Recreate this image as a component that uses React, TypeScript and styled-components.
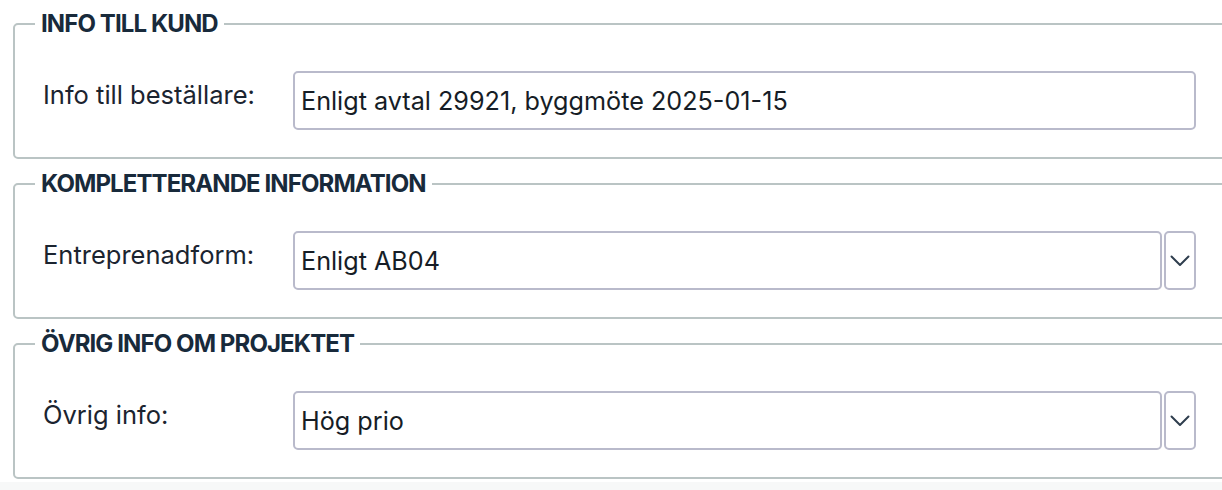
import React from "react";
import styled, { createGlobalStyle } from "styled-components";

const GlobalStyle = createGlobalStyle`
  html, body {
    margin: 0;
    padding: 0;
    background: #f7f8f8;
    overflow: hidden;
  }
  body {
    font-family: Inter, "Noto Sans", "Liberation Sans", sans-serif;
    color: #1b2430;
  }
`;

const Page = styled.div`
  display: flex;
  flex-direction: column;
  gap: 10px;
  padding: 9px 0 3px 13px;
  width: 1250px;
  background: #ffffff;
`;

const Fieldset = styled.fieldset`
  margin: 0;
  min-width: 0;
  border: 2px solid #bac4c4;
  border-radius: 5px;
  padding: 32px 0 27px 28px;
`;

const Legend = styled.legend`
  margin-left: -8px;
  padding: 0 6px;
  font-size: 24px;
  line-height: 30px;
  font-weight: 700;
  letter-spacing: -0.9px;
  color: #182a3b;
`;

const Row = styled.div`
  display: flex;
  align-items: flex-start;
`;

const Label = styled.label`
  width: 250px;
  flex: none;
  padding-top: 9px;
  font-size: 25.5px;
  line-height: 30px;
  color: #1b2430;
`;

const Control = styled.div`
  display: flex;
  gap: 2px;
  width: 903px;
`;

const Box = styled.div`
  flex: 1;
  height: 59px;
  box-sizing: border-box;
  border: 2px solid #b9bacb;
  border-radius: 5px;
  display: flex;
  align-items: center;
  padding: 0 6px;
  font-size: 25.2px;
  color: #161d26;
  background: #fff;
`;

const DropButton = styled.div`
  flex: none;
  width: 32px;
  height: 59px;
  box-sizing: border-box;
  border: 2px solid #b9bacb;
  border-radius: 5px;
  display: flex;
  align-items: center;
  justify-content: center;
  color: #2f3e4e;
`;

const Chevron = () => (
  <svg width="20" height="12" viewBox="0 0 20 12" fill="none">
    <path d="M1.5 1.5 L10 10 L18.5 1.5" stroke="currentColor" strokeWidth="2" strokeLinecap="round" strokeLinejoin="round" />
  </svg>
);

type FieldProps = { label: string; value: string; select?: boolean };

const Field = ({ label, value, select }: FieldProps) => (
  <Row>
    <Label>{label}</Label>
    <Control>
      <Box>{value}</Box>
      {select && (
        <DropButton>
          <Chevron />
        </DropButton>
      )}
    </Control>
  </Row>
);

export default function App() {
  return (
    <>
      <GlobalStyle />
      <Page>
        <Fieldset>
          <Legend>INFO TILL KUND</Legend>
          <Field label="Info till beställare:" value="Enligt avtal 29921, byggmöte 2025-01-15" />
        </Fieldset>
        <Fieldset>
          <Legend>KOMPLETTERANDE INFORMATION</Legend>
          <Field label="Entreprenadform:" value="Enligt AB04" select />
        </Fieldset>
        <Fieldset>
          <Legend>ÖVRIG INFO OM PROJEKTET</Legend>
          <Field label="Övrig info:" value="Hög prio" select />
        </Fieldset>
      </Page>
    </>
  );
}
